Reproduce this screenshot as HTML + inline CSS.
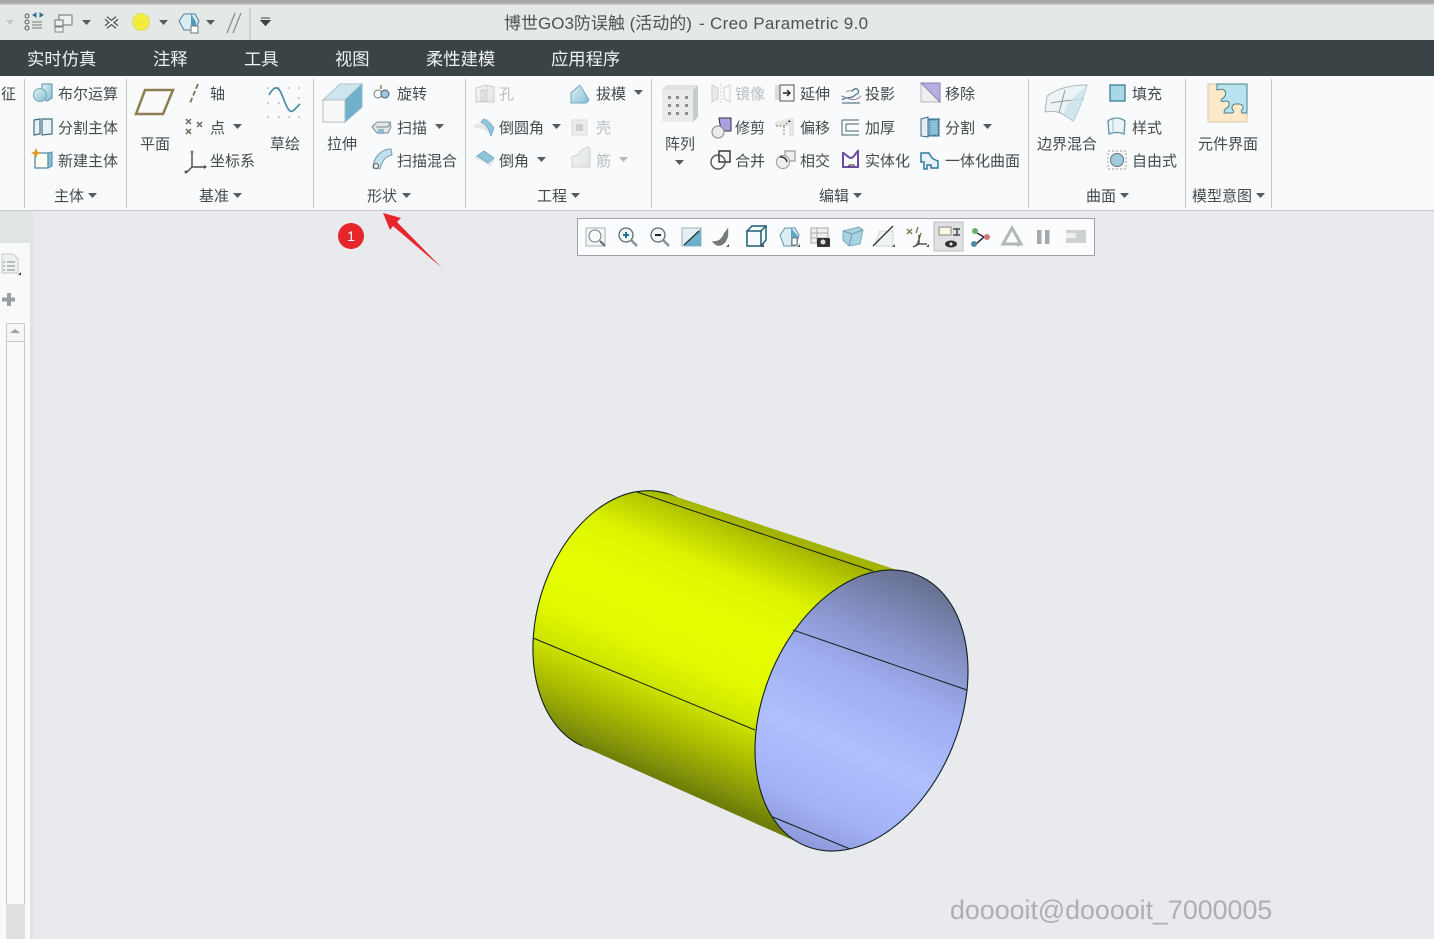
<!DOCTYPE html>
<html lang="zh"><head><meta charset="utf-8"><title>Creo Parametric 9.0</title>
<style>
html,body{margin:0;padding:0}
body{width:1434px;height:939px;overflow:hidden;position:relative;background:#e8eaee;font-family:"Liberation Sans","Noto Sans CJK SC",sans-serif}
#top{position:absolute;left:0;top:0;width:1434px;height:40px;background:#e4e9e8}
#strip{position:absolute;left:0;top:0;width:1434px;height:5px;background:linear-gradient(#a9a9a9 0,#a9a9a9 60%,#d6dad9 100%)}
#menu{position:absolute;left:0;top:40px;width:1434px;height:36px;background:#3a4447}
#rib{position:absolute;left:0;top:76px;width:1434px;height:134px;background:#f8fafb;border-bottom:1px solid #c6cace}
.t{position:absolute;white-space:nowrap;line-height:20px;font-size:15px;color:#454a4d;margin-top:2px}
.g{color:#b9bdc0}
.m{position:absolute;white-space:nowrap;font-size:17.3px;color:#f0f2f2;line-height:24px;top:47px}
.s{position:absolute;top:79px;width:1px;height:129px;background:#c3c7ca}
.ti{position:absolute;top:13px;font-size:17px;line-height:22px;color:#4d5254;white-space:nowrap}
#ov{position:absolute;left:0;top:0}
#wm{position:absolute;left:950px;top:892px;font-size:26.8px;line-height:36px;color:#adafb2;white-space:nowrap}
#tb{position:absolute;left:577px;top:218px;width:516px;height:36px;background:#fbfcfd;border:1px solid #9fa4a8}
#lb{position:absolute;left:0;top:211px;width:33px;height:32px;background:#dfe4e5}
#lp{position:absolute;left:0;top:243px;width:30px;height:696px;background:#f7f9fa;border-right:3px solid #e0e3e6}
#su{position:absolute;left:6px;top:323px;width:17px;height:18px;border:1px solid #c9cbcd;background:#f4f6f7}
#st{position:absolute;left:6px;top:341px;width:17px;height:562px;border:1px solid #c4c6c8;background:#f8f9f9}
#sb{position:absolute;left:6px;top:904px;width:19px;height:35px;background:#dedfe0}
#n1{position:absolute;left:338px;top:223px;width:26px;height:26px;border-radius:50%;background:#e7262c;color:#fff;font-size:14px;line-height:26px;text-align:center}
</style></head><body>
<div id="top"></div><div id="strip"></div>
<div class="ti" style="left:504px">博世GO3防误触 (活动的)</div>
<div class="ti" style="left:699px;letter-spacing:.33px">- Creo Parametric 9.0</div>
<div id="menu"></div>
<div class="m" style="left:27px">实时仿真</div><div class="m" style="left:153px">注释</div><div class="m" style="left:244px">工具</div><div class="m" style="left:335px">视图</div><div class="m" style="left:426px">柔性建模</div><div class="m" style="left:551px">应用程序</div>
<div id="rib"></div>
<div class="s" style="left:24px"></div><div class="s" style="left:126px"></div><div class="s" style="left:313px"></div><div class="s" style="left:465px"></div><div class="s" style="left:651px"></div><div class="s" style="left:1028px"></div><div class="s" style="left:1185px"></div><div class="s" style="left:1271px"></div>

<div class="t" style="left:1px;top:83px">征</div>
<div class="t" style="left:58px;top:83px">布尔运算</div><div class="t" style="left:58px;top:117px">分割主体</div><div class="t" style="left:58px;top:150px">新建主体</div><div class="t" style="left:54px;top:185px">主体</div>
<div class="t" style="left:140px;top:133px">平面</div><div class="t" style="left:210px;top:83px">轴</div><div class="t" style="left:210px;top:117px">点</div><div class="t" style="left:210px;top:150px">坐标系</div><div class="t" style="left:199px;top:185px">基准</div><div class="t" style="left:270px;top:133px">草绘</div>
<div class="t" style="left:327px;top:133px">拉伸</div><div class="t" style="left:397px;top:83px">旋转</div><div class="t" style="left:397px;top:117px">扫描</div><div class="t" style="left:397px;top:150px">扫描混合</div><div class="t" style="left:367px;top:185px">形状</div>
<div class="t g" style="left:499px;top:83px">孔</div><div class="t" style="left:596px;top:83px">拔模</div><div class="t" style="left:499px;top:117px">倒圆角</div><div class="t g" style="left:596px;top:117px">壳</div><div class="t" style="left:499px;top:150px">倒角</div><div class="t g" style="left:596px;top:150px">筋</div><div class="t" style="left:537px;top:185px">工程</div>
<div class="t" style="left:665px;top:133px">阵列</div><div class="t g" style="left:735px;top:83px">镜像</div><div class="t" style="left:800px;top:83px">延伸</div><div class="t" style="left:865px;top:83px">投影</div><div class="t" style="left:945px;top:83px">移除</div>
<div class="t" style="left:735px;top:117px">修剪</div><div class="t" style="left:800px;top:117px">偏移</div><div class="t" style="left:865px;top:117px">加厚</div><div class="t" style="left:945px;top:117px">分割</div>
<div class="t" style="left:735px;top:150px">合并</div><div class="t" style="left:800px;top:150px">相交</div><div class="t" style="left:865px;top:150px">实体化</div><div class="t" style="left:945px;top:150px">一体化曲面</div><div class="t" style="left:819px;top:185px">编辑</div>
<div class="t" style="left:1037px;top:133px">边界混合</div><div class="t" style="left:1132px;top:83px">填充</div><div class="t" style="left:1132px;top:117px">样式</div><div class="t" style="left:1132px;top:150px">自由式</div><div class="t" style="left:1086px;top:185px">曲面</div>
<div class="t" style="left:1198px;top:133px">元件界面</div><div class="t" style="left:1192px;top:185px">模型意图</div>

<div id="lb"></div><div id="lp"></div><div id="su"></div><div id="st"></div><div id="sb"></div>
<div id="tb"></div>

<svg id="ov" width="1434" height="939" viewBox="0 0 1434 939" xmlns="http://www.w3.org/2000/svg">
<defs>
<linearGradient id="cy" gradientUnits="userSpaceOnUse" x1="720" y1="512" x2="617" y2="762">
<stop offset="0" stop-color="#a3b300"/><stop offset=".07" stop-color="#b9cc00"/><stop offset=".2" stop-color="#dcf400"/><stop offset=".38" stop-color="#e6ff00"/><stop offset=".55" stop-color="#e2fb00"/><stop offset=".68" stop-color="#cfe600"/><stop offset=".82" stop-color="#aabc00"/><stop offset=".94" stop-color="#84940a"/><stop offset="1" stop-color="#6f7d08"/>
</linearGradient>
<linearGradient id="fc" gradientUnits="userSpaceOnUse" x1="925" y1="585" x2="805" y2="850">
<stop offset="0" stop-color="#687294"/><stop offset=".18" stop-color="#8490c4"/><stop offset=".38" stop-color="#9fadf2"/><stop offset=".62" stop-color="#afbffc"/><stop offset=".84" stop-color="#a4b2f8"/><stop offset="1" stop-color="#8b97d6"/>
</linearGradient>
<linearGradient id="ice" x1="0" y1="0" x2="1" y2="1"><stop offset="0" stop-color="#e6f3f7"/><stop offset="1" stop-color="#7fbdd4"/></linearGradient>
<linearGradient id="gry" x1="0" y1="0" x2="1" y2="1"><stop offset="0" stop-color="#f1f3f3"/><stop offset="1" stop-color="#c9cdce"/></linearGradient>
<radialGradient id="sun"><stop offset="0" stop-color="#eee63a"/><stop offset=".75" stop-color="#f4ef3e"/><stop offset="1" stop-color="#dcd86c"/></radialGradient>
</defs>

<!-- quick access -->
<g fill="none" stroke="#555c60" stroke-width="1">
<path d="M6 20h8l-4 5z" fill="#c4c8c8" stroke="none"/>
<circle cx="27" cy="16" r="2"/><circle cx="27" cy="22" r="2"/><circle cx="27" cy="28" r="2"/>
<path d="M32 22h10M32 25h10M32 28h10" stroke="#777"/>
<path d="M33 15l3-2v4zM43 15l-3-2v4z" fill="#2e6d8c" stroke="#2e6d8c"/>
<rect x="59" y="15" width="13" height="10" fill="#eef1f1" stroke="#6a7072"/><rect x="55" y="20" width="8" height="6" fill="#eef1f1" stroke="#6a7072"/><rect x="55" y="27" width="8" height="5" fill="#eef1f1" stroke="#888"/>
<path d="M82 20h9l-4.500 5z" fill="#555c60" stroke="none"/>
<path d="M106 18l11 9M117 18l-11 9" stroke="#4f5558" stroke-width="4.500"/><path d="M106 18l11 9M117 18l-11 9" stroke="#e9eded" stroke-width="2"/>
<circle cx="141" cy="22" r="9" fill="url(#sun)" stroke="none"/>
<path d="M159 20h9l-4.500 5z" fill="#555c60" stroke="none"/>
<path d="M179 21l5-7h11l4 7-4 9h-11z" fill="#dbecf3" stroke="#4c7f97"/><path d="M191 14l5 8v8h-5z" fill="#4f9bc1" stroke="none"/><rect x="191" y="26" width="7" height="7" fill="#fff" stroke="#777"/>
<path d="M206 20h9l-4.500 5z" fill="#555c60" stroke="none"/>
<path d="M227 33l8-20M233 33l8-20" stroke="#8c9092" stroke-width="1.300"/>
<path d="M250 8v32" stroke="#b5babb"/>
<path d="M261 18h9M261 20.500h9l-4.500 5z" fill="#3c4144" stroke="#3c4144"/>
</g>

<!-- 主体 -->
<path d="M42 84h10v14l-5 3-5-3z" fill="url(#ice)" stroke="#5c8da3"/><circle cx="40" cy="95" r="6.500" fill="url(#ice)" stroke="#7aa"/>
<path d="M34 120l6-1v15l-6 1zM42 119h10v15l-10 1z" fill="#e8f1f4" stroke="#406e85" stroke-width="1.200"/>
<path d="M35 153h13v15H35z" fill="#fdfdf0" stroke="#4f8ca6" stroke-width="1.300"/><path d="M48 153l4-1v14l-4 2z" fill="#8ebdd0" stroke="#4f8ca6"/>
<path d="M36 148l1.500 3.500 3.500 1.500-3.500 1.500-1.500 3.500-1.500-3.500-3.500-1.500 3.500-1.500z" fill="#e2982a"/>
<!-- 基准 -->
<path d="M145 90h28l-10 24h-27z" fill="none" stroke="#8f7e52" stroke-width="2.500"/>
<path d="M198 84l-8 19" stroke="#7b6f4c" stroke-width="1.800" stroke-dasharray="5 2.500"/>
<g stroke="#6a6a5c" stroke-width="1.500"><path d="M186 119l5 5M191 119l-5 5M197 122l5 5M202 122l-5 5M186 129l5 5M191 129l-5 5"/></g>
<path d="M192 151v16M192 167h12M192 167l-6 6" fill="none" stroke="#4a4d4e" stroke-width="1.400"/><circle cx="192" cy="152" r="1.500" fill="#8a7a50"/><path d="M204 165l3 2-3 2z" fill="#444"/><circle cx="186" cy="172" r="1.500" fill="#555"/>
<path d="M269 95c5-9 9-10 13 0s7 20 12 15 5-5 6-6" fill="none" stroke="#4b8ba8" stroke-width="1.700"/>
<g fill="#9a9a9a"><circle cx="268" cy="88" r=".8"/><circle cx="279" cy="88" r=".8"/><circle cx="289" cy="88" r=".8"/><circle cx="299" cy="88" r=".8"/><circle cx="268" cy="103" r=".8"/><circle cx="279" cy="103" r=".8"/><circle cx="299" cy="98" r=".8"/><circle cx="268" cy="117" r=".8"/><circle cx="279" cy="117" r=".8"/><circle cx="289" cy="117" r=".8"/><circle cx="299" cy="117" r=".8"/></g>
<!-- 形状 -->
<path d="M323 100l17-16h22l-17 16z" fill="#cfe5ee" stroke="#a9c7d4"/><path d="M345 100l17-16v23l-17 15z" fill="#6fb0cc" stroke="#8ab7ca"/><rect x="323" y="100" width="22" height="22" fill="#f7f8f8" stroke="#b9bcbc"/>
<circle cx="378" cy="94" r="4" fill="none" stroke="#777"/><circle cx="385" cy="94" r="4" fill="#9cc7d8" stroke="#44606e"/><path d="M381 85v4" stroke="#8a7a50" stroke-width="1.500"/>
<path d="M372 127l5-5h12l2 5-3 6h-11z" fill="#dfe6e8" stroke="#7b8a90"/><path d="M376 127h12l3-5" fill="none" stroke="#7b8a90"/><rect x="378" y="129" width="6" height="5" fill="#8fb9cb"/>
<path d="M373 168c0-10 8-19 18-19l1 6c-6 1-10 6-12 14z" fill="#bfe0ec" stroke="#7a9dac"/><circle cx="376" cy="166" r="2.500" fill="#eee" stroke="#555"/>
<!-- 工程 -->
<g opacity=".45"><path d="M476 88l10-3 8 2v15h-18z" fill="url(#gry)" stroke="#999"/><rect x="481" y="90" width="4" height="11" fill="#ccc" stroke="#999"/><path d="M487 86v16" stroke="#999"/></g>
<path d="M571 93l9-8 9 15-3 3h-15z" fill="url(#ice)" stroke="#6fa8c0"/><path d="M580 85l-4 17" stroke="#b9d7e2"/>
<path d="M474 124c6 0 11-4 12-6 4 2 7 6 8 9l-3 9c-3-5-8-8-17-8z" fill="#e6e8e8"/><path d="M484 119c4 2 7 5 10 9l-3 8c-2-7-5-12-10-14z" fill="#8fc6dc" stroke="#6aa8c2" stroke-width=".8"/>
<path d="M474 157l10-6 11 8-5 8c-3-4-8-6-15-8z" fill="#e6e8e8"/><path d="M484 151l10 7-6 5-11-7z" fill="#8fc6dc" stroke="#6aa8c2" stroke-width=".8"/>
<g opacity=".55"><rect x="572" y="120" width="15" height="15" fill="#dfe2e2" stroke="#c1c5c5"/><rect x="576" y="124" width="7" height="7" fill="#a8adae"/></g>
<g opacity=".5"><path d="M572 157l8-3v-3l8-4 2 2v18h-18z" fill="url(#gry)" stroke="#aaa"/></g>
<!-- 编辑 -->
<path d="M662 89l5-4h31v32l-5 5H662z" fill="#dfe2e3"/><rect x="662" y="90" width="31" height="32" fill="#e9ebec"/><path d="M693 90l5-5v32l-5 5z" fill="#c6cbcc"/>
<g fill="#888c8e"><rect x="668" y="96" width="3" height="3"/><rect x="676" y="96" width="3" height="3"/><rect x="685" y="96" width="3" height="3"/><rect x="668" y="104" width="3" height="3"/><rect x="676" y="104" width="3" height="3"/><rect x="685" y="104" width="3" height="3"/><rect x="668" y="112" width="3" height="3"/><rect x="676" y="112" width="3" height="3"/><rect x="685" y="112" width="3" height="3"/></g>
<g opacity=".45" fill="none" stroke="#9aa0a2"><path d="M712 85l6 3v11l-6 3z" fill="#ddd"/><path d="M730 85l-6 3v11l6 3z"/><path d="M721 84v19" stroke-dasharray="2 1.500"/></g>
<rect x="775" y="85" width="5" height="15" fill="#d9dcdd"/><rect x="780" y="85" width="14" height="16" fill="#f6f7f7" stroke="#555"/><path d="M783 93h6M787 90l3 3-3 3" fill="none" stroke="#222" stroke-width="1.400"/>
<path d="M842 100c4-4 9-1 12-4s6-2 4-6c-2-3-5 0-6 1M842 103h18" fill="none" stroke="#5a7a8c" stroke-width="1.300"/><path d="M846 92c3-2 5-2 7 0" fill="none" stroke="#9aa" stroke-width="1.200"/><path d="M841 96c4 0 12 8 20 0" fill="none" stroke="#8b7bb5"/>
<path d="M921 83h19v19h-19z" fill="#eef0f0" stroke="#b5b9ba"/><path d="M921 83h19v19z" fill="#b9aee0" stroke="#8d81b8"/>
<path d="M719 118h12v13l-10 0z" fill="#a99fe2" stroke="#333"/><circle cx="718" cy="132" r="6" fill="#e9ebeb" stroke="#888"/>
<path d="M775 122c5-1 11-3 16-4 2 0 3 1 3 2v16h-5v-10h-14z" fill="#e4e6e6"/><path d="M776 126h8l5-5M784 126v10" fill="none" stroke="#8a7a50" stroke-dasharray="2 1.500"/><path d="M789 120l2 2-3 0z" fill="#333"/>
<path d="M842 120h17M842 120v15h17M846 124h13M846 124v7h13" fill="none" stroke="#68808c" stroke-width="1.200"/>
<rect x="922" y="119" width="17" height="17" fill="#8bc0d8" stroke="#2e6d8c"/><path d="M921 119l7-2v20l-7-1zM939 118v18" fill="#e4eef2" stroke="#3a6a80"/><path d="M930 120h8v15h-8z" fill="none" stroke="#3d7c9a" stroke-dasharray="1.500 1"/>
<rect x="719" y="151" width="11" height="11" fill="#f8f8f8" stroke="#2e2e2e" stroke-width="1.400"/><circle cx="718" cy="162" r="7" fill="none" stroke="#555" stroke-width="1.400"/>
<rect x="785" y="151" width="10" height="10" fill="#eee" stroke="#888"/><circle cx="783" cy="162" r="6.500" fill="#eee" stroke="#999"/><path d="M780 157a6 6 0 0 1 7 5" fill="none" stroke="#222" stroke-width="1.400"/>
<path d="M843 167v-14c2 0 5 5 8 5s5-6 7-7v16z" fill="none" stroke="#6a4ba0" stroke-width="2"/><path d="M849 167v-2h6" stroke="#333" fill="none"/>
<path d="M921 153h8c2 4 3 6 9 8v7h-7l0-3-4 0v4h-3v-7h-3z" fill="#e8f1f4" stroke="#2b7c9e" stroke-width="1.500"/>
<!-- 曲面 -->
<path d="M1047 96c8-6 20-11 40-11-3 10-7 24-14 36l-12-8c-6-2-11-2-16-1z" fill="#edf4f6" stroke="#aeb6b7"/><path d="M1065 90l-6 23M1051 103c8-2 24-3 33-4" fill="none" stroke="#8f9a9b"/><path d="M1087 85c-3 12-8 26-14 36l-10-7 5-11z" fill="#c8e3ee" opacity=".8"/>
<rect x="1110" y="85" width="15" height="16" fill="#aad7e6" stroke="#3b7d98" stroke-width="1.300"/>
<path d="M1108 121c5-4 12-4 17 0l-1 13c-4-2-11-2-15 0z" fill="#ecf4f7" stroke="#5c93a9" stroke-width="1.300"/><path d="M1113 119v15" stroke="#9ec1cf"/>
<rect x="1108" y="151" width="18" height="18" fill="none" stroke="#999" stroke-dasharray="2 2"/><circle cx="1117" cy="160" r="6.500" fill="#9ccde0" stroke="#6a6f72"/>
<!-- 模型意图 -->
<rect x="1208" y="84" width="39" height="38" fill="#fbe9c8" stroke="#d8cba5"/><path d="M1217 84H1247V113H1243c-2 0-2-2-1-3 2-2 1-6-3-6h-3c-4 0-5 4-3 6 1 1 1 3-1 3H1224c0-3 1-4 3-5 3-2 3-7-1-7-2 0-4 1-5 0 0-2 3-3 4-5s1-5-1-6-3-1-7 0z" fill="#b9e3ee" stroke="#4c7e8e"/>
<!-- group arrows -->
<g fill="#555b5e"><path d="M88 193h9l-4.500 5z"/><path d="M233 193h9l-4.500 5z"/><path d="M402 193h9l-4.500 5z"/><path d="M571 193h9l-4.500 5z"/><path d="M853 193h9l-4.500 5z"/><path d="M1120 193h9l-4.500 5z"/><path d="M1256 193h9l-4.500 5z"/>
<path d="M233 124h9l-4.500 5z"/><path d="M435 124h9l-4.500 5z"/><path d="M634 90h9l-4.500 5z"/><path d="M552 124h9l-4.500 5z"/><path d="M537 157h9l-4.500 5z"/><path d="M675 160h9l-4.500 5z"/><path d="M983 124h9l-4.500 5z"/></g>
<path d="M619 157h9l-4.500 5z" fill="#b5b9bb"/>

<!-- view toolbar -->
<g fill="none" stroke="#5d6b72">
<rect x="586" y="228" width="19" height="18" fill="#f4f6f6" stroke="#aab3b6"/><circle cx="595" cy="236" r="6" fill="#f8fbfc" stroke="#6f7c82"/><path d="M600 241l5 5" stroke-width="2"/>
<circle cx="626" cy="235" r="7" fill="#f0f7f9" stroke-width="1.300"/><path d="M623 235h6M626 232v6" stroke="#1f6f8e" stroke-width="2"/><path d="M631 240l6 6" stroke="#8a9295" stroke-width="2.500"/>
<circle cx="658" cy="235" r="7" fill="#f0f7f9" stroke-width="1.300"/><path d="M655 235h6" stroke="#222" stroke-width="2"/><path d="M663 240l6 6" stroke="#8a9295" stroke-width="2.500"/>
<rect x="682" y="228" width="19" height="18" fill="#e4f0f4" stroke="#9fb0b6"/><path d="M701 228v18h-18z" fill="#6fb0cb" stroke="none"/><path d="M684 245l15-14" stroke="#2b3438" stroke-width="1.300"/>
<path d="M712 241c6 1 10-2 12-8 2-2 3-4 4-5 1 6 0 14-6 17-4 2-8 0-10-4z" fill="#76797a" stroke="none"/>
<path d="M747 231h14v15h-14z" fill="#f7fbfc" stroke="#1d5d77" stroke-width="1.500"/><path d="M747 231l5-5h14v14l-5 6M761 231l5-5" stroke="#1d5d77" stroke-width="1.500"/>
<path d="M780 235l5-7h10l4 7-3 11h-12z" fill="#dcedf4" stroke="#5e8ea5"/><path d="M791 228l7 8v9h-7z" fill="#5fa6c8" stroke="none"/><rect x="792" y="238" width="5" height="7" fill="#fff" stroke="#777"/>
<rect x="811" y="228" width="17" height="15" fill="#f0f0f0" stroke="#a6a6a6"/><path d="M811 233h17M811 238h17M817 228v15" stroke="#aaa"/><rect x="817" y="238" width="13" height="9" rx="1" fill="#333" stroke="none"/><circle cx="823" cy="242" r="2.500" fill="#ddd" stroke="none"/>
<path d="M843 231l16-4 4 3-3 14-11 2-6-6z" fill="#a9d2e2" stroke="#7eaabb"/><path d="M843 231l9 3 11-4M852 234l-3 12" stroke="#6f9bad"/>
<path d="M875 244l5-13h13v15h-16z" fill="#f0f3f4" stroke="#c1c6c8" stroke-dasharray="2 1"/><path d="M873 246l20-20" stroke="#2a3034" stroke-width="1.300"/>
<path d="M907 229l5 5M912 229l-5 5M918 227l-2 6M921 233l-2 6M919 240l-3 6" stroke="#8a7a50" stroke-width="1.500"/><path d="M919 235v9h8M919 244l-6 3" stroke="#333" stroke-width="1.200"/>
<rect x="934" y="222" width="29" height="29" fill="#dfe1e3" stroke="#bbbdbf"/><rect x="939" y="227" width="12" height="8" fill="#faf6df" stroke="#888"/><path d="M953 229h7M957 229v6M953 235h7" stroke="#333" stroke-width="1.300"/><ellipse cx="951" cy="244" rx="6" ry="3.500" fill="#333" stroke="none"/><circle cx="951" cy="244" r="1.500" fill="#eee" stroke="none"/>
<path d="M977 233l7 4-8 7M984 237l3 0" stroke="#333" stroke-width="1.500"/><circle cx="975" cy="231" r="3" fill="#6fae6d" stroke="none"/><circle cx="987" cy="237" r="3" fill="#d2767c" stroke="none"/><circle cx="974" cy="244" r="3" fill="#4c8cab" stroke="none"/>
<path d="M1012 228l9 16h-18z" stroke="#b2b7b9" stroke-width="3"/><path d="M1017 242l4 3-4 2z" fill="#b2b7b9" stroke="none"/>
<rect x="1037" y="230" width="4.500" height="14" fill="#a6aaac" stroke="none"/><rect x="1045" y="230" width="4.500" height="14" fill="#a6aaac" stroke="none"/>
<rect x="1066" y="230" width="20" height="13" fill="#cfd2d3" stroke="none"/><path d="M1066 233h10v5h-10z" fill="#eef0f0" stroke="none"/>
<path d="M726 247h3v-3zM761 247h3v-3zM797 247h3v-3zM892 247h3v-3zM926 247h3v-3z" fill="#555" stroke="none"/>
</g>

<!-- left panel icons -->
<path d="M2 254h11l5 5v14H2z" fill="#eef1f1" stroke="#c4c9ca"/><path d="M7 262h8M7 266h8M7 270h8M3 262h2M3 266h2M3 270h2" stroke="#80888b"/><path d="M18 275h3v-3z" fill="#444"/>
<path d="M9 293v13M2 299.500h13" stroke="#9a9fa2" stroke-width="4"/>
<path d="M10 333l5-4 5 4z" fill="#9a9fa2"/>

<!-- cylinder -->
<path d="M541 594.900A90 132 16.700 1 1 715 647.100A90 132 16.700 1 1 541 594.900Z" fill="url(#cy)" stroke="#10201e" stroke-width="1.100"/>
<path d="M668 494L900 571L950 700L804 845L582 746L640 620z" fill="url(#cy)"/>
<path d="M637 492L873 571M533 638L755 730" stroke="#10221c" stroke-width="1" fill="none"/>
<path d="M771 673A97 145 22.500 1 1 952 748A97 145 22.500 1 1 771 673Z" fill="url(#fc)" stroke="#10201e" stroke-width="1.100"/>
<path d="M793 630L967 690M773 817L850 849" stroke="#10221c" stroke-width="1" fill="none"/>

<!-- red arrow -->
<path d="M383 213L401 218L397 222L442 268L393 226L390 230z" fill="#e6262c"/>
</svg>
<div id="n1">1</div>
<div id="wm">dooooit@dooooit_7000005</div>
</body></html>
